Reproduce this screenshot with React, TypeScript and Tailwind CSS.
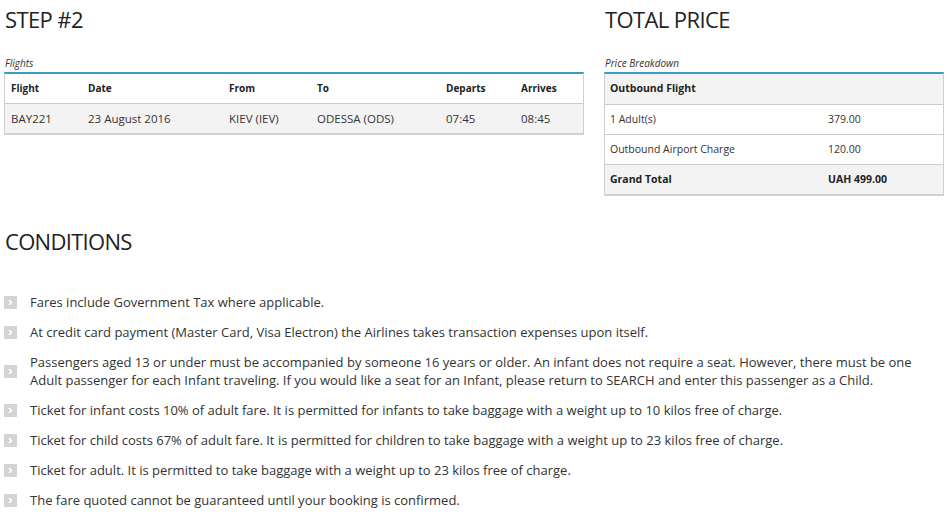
const FLIGHT_COLS = [
  { label: "Flight", value: "BAY221", w: "w-[77px]" },
  { label: "Date", value: "23 August 2016", w: "w-[141px]" },
  { label: "From", value: "KIEV (IEV)", w: "w-[88px]" },
  { label: "To", value: "ODESSA (ODS)", w: "w-[129px]" },
  { label: "Departs", value: "07:45", w: "w-[75px]" },
  { label: "Arrives", value: "08:45", w: "flex-1" },
];

const PRICE_ROWS = [
  { label: "Outbound Flight", value: "", head: true },
  { label: "1 Adult(s)", value: "379.00", head: false },
  { label: "Outbound Airport Charge", value: "120.00", head: false },
  { label: "Grand Total", value: "UAH 499.00", head: true },
];

const CONDITIONS = [
  "Fares include Government Tax where applicable.",
  "At credit card payment (Master Card, Visa Electron) the Airlines takes transaction expenses upon itself.",
  "Passengers aged 13 or under must be accompanied by someone 16 years or older. An infant does not require a seat. However, there must be one Adult passenger for each Infant traveling. If you would like a seat for an Infant, please return to SEARCH and enter this passenger as a Child.",
  "Ticket for infant costs 10% of adult fare. It is permitted for infants to take baggage with a weight up to 10 kilos free of charge.",
  "Ticket for child costs 67% of adult fare. It is permitted for children to take baggage with a weight up to 23 kilos free of charge.",
  "Ticket for adult. It is permitted to take baggage with a weight up to 23 kilos free of charge.",
  "The fare quoted cannot be guaranteed until your booking is confirmed.",
];

function Bullet() {
  return (
    <span className="w-[13px] h-[13px] shrink-0 bg-[#d4d4d4] flex items-center justify-center">
      <svg width="5" height="7" viewBox="0 0 5 7">
        <path d="M1 1 L3.5 3.5 L1 6" stroke="#fff" strokeWidth="1.6" fill="none" />
      </svg>
    </span>
  );
}

export default function App() {
  return (
    <div className="w-[949px] h-[517px] bg-white text-[#333] overflow-hidden px-1 font-['Open_Sans',sans-serif]">
      <div className="flex gap-[20px]">
        {/* step / flights */}
        <div className="w-[580px]">
          <h1 className="text-[22px] leading-[30px] text-[#222] pt-[4px] pl-px tracking-[-0.6px]">STEP #2</h1>
          <p className="italic text-[10px] leading-[14px] mt-[22px] mb-[2px] pl-px">Flights</p>
          <div className="border-t-2 border-t-[#3a9dbf] border-x border-x-[#d0d0d0] border-b-2 border-b-[#d0d0d0]">
            <div className="flex h-[30px] items-center px-[6px] border-b border-[#cccccc] text-[10px] font-bold text-[#222]">
              {FLIGHT_COLS.map((c) => (
                <span key={c.label} className={c.w}>{c.label}</span>
              ))}
            </div>
            <div className="flex h-[29px] items-center px-[6px] bg-[#f3f3f3] text-[11.5px]">
              {FLIGHT_COLS.map((c) => (
                <span key={c.label} className={c.w}>{c.value}</span>
              ))}
            </div>
          </div>
        </div>

        {/* total price */}
        <div className="w-[340px]">
          <h1 className="text-[22px] leading-[30px] text-[#222] pt-[4px] pl-px tracking-[-0.6px]">TOTAL PRICE</h1>
          <p className="italic text-[10px] leading-[14px] mt-[22px] mb-[2px] pl-px">Price Breakdown</p>
          <div className="border-t-2 border-t-[#3a9dbf] border-x border-x-[#d0d0d0] border-b-2 border-b-[#d0d0d0]">
            {PRICE_ROWS.map((r, i) => (
              <div
                key={r.label}
                className={`flex h-[30px] items-center px-[5px] text-[10.5px] ${i > 0 ? "border-t border-[#cccccc]" : ""} ${r.head ? "bg-[#f3f3f3] font-bold text-[#222]" : "bg-white"}`}
              >
                <span className="w-[218px]">{r.label}</span>
                <span>{r.value}</span>
              </div>
            ))}
          </div>
        </div>
      </div>

      <h2 className="text-[22px] leading-[30px] text-[#222] mt-[30px] pl-px tracking-[-0.7px]">CONDITIONS</h2>
      <ul className="mt-[37px] flex flex-col gap-[12px] text-[13px] leading-[18px]">
        {CONDITIONS.map((t) => (
          <li key={t} className="flex items-center gap-[13px]">
            <Bullet />
            <span>{t}</span>
          </li>
        ))}
      </ul>
    </div>
  );
}
